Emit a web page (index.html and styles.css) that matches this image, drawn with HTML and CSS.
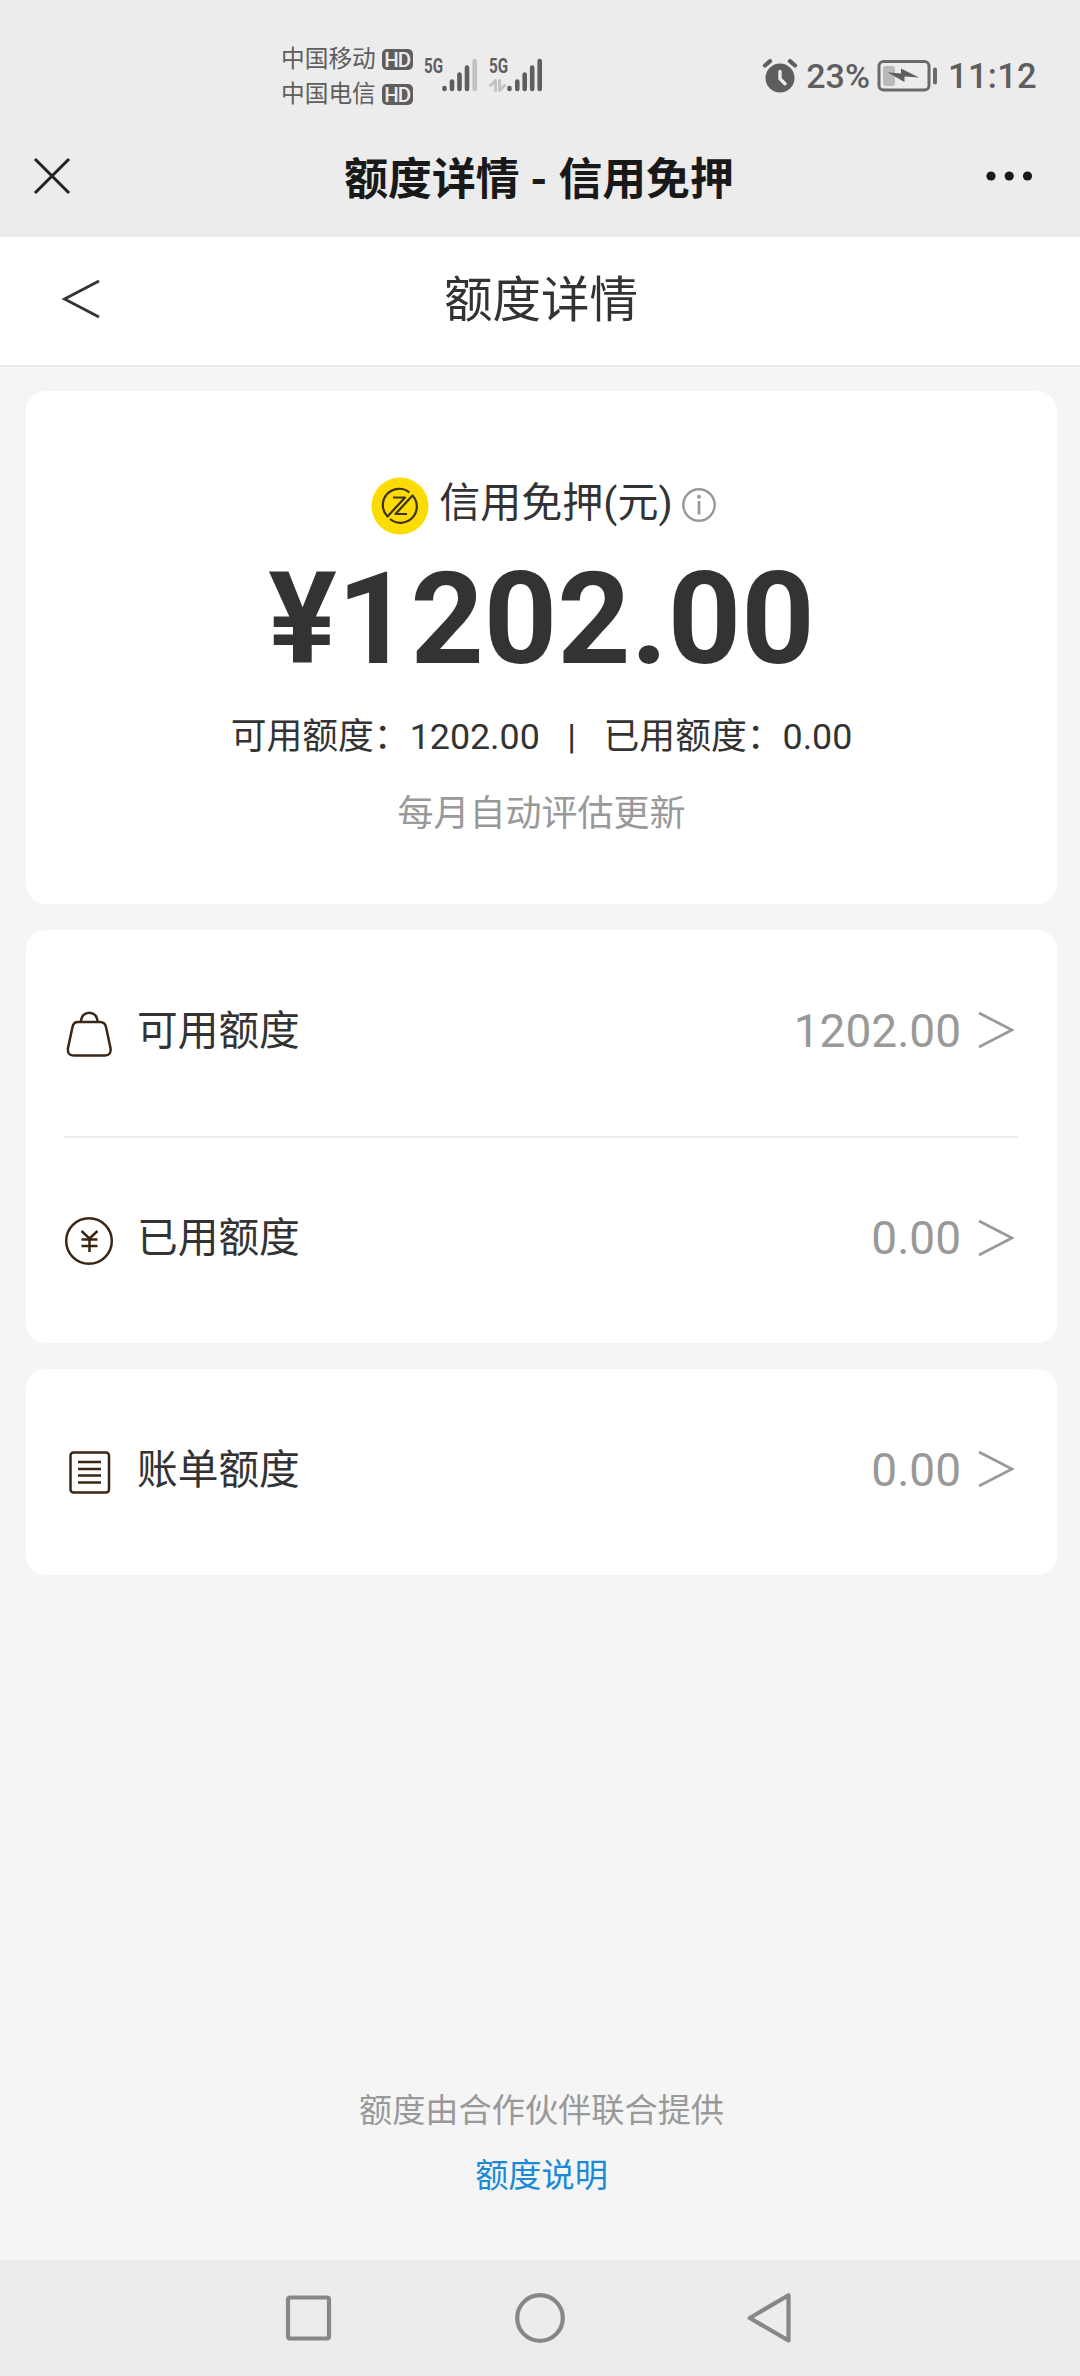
FILE: index.html
```html
<!DOCTYPE html>
<html lang="zh-CN">
<head>
<meta charset="utf-8">
<title>额度详情</title>
<link rel="stylesheet" href="styles.css">
</head>
<body>
<header class="status">
  <div class="carriers">
    <div class="carrier">中国移动<span class="hd">HD</span></div>
    <div class="carrier">中国电信<span class="hd">HD</span></div>
  </div>
  <div class="signal">
    <span class="gen">5G</span>
    <svg class="bars" width="36" height="34" viewBox="0 0 36 34" stroke="#5e5e5e" stroke-width="4.6" stroke-linecap="round"><path d="M2.5 30v1M10 23.5V31M17.5 16.5V31M25 9.500V31"/><path d="M32.700 3V31" stroke="#c2c2c2"/></svg>
  </div>
  <div class="signal second">
    <span class="gen">5G</span>
    <svg class="bars" width="54" height="34" viewBox="0 0 54 34" fill="none" stroke="#5e5e5e" stroke-width="4.600" stroke-linecap="round"><path d="M20.500 30v1M28.300 23.500V31M35.700 16.500V31M43.200 9.500V31M50.700 3V31"/><path d="M1.500 27.500L6.500 22.500V32.500M10.500 22.500V32.500L15.500 27.500" stroke="#c2c2c2" stroke-width="2.800" stroke-linejoin="round"/></svg>
  </div>
  <div class="power">
    <svg class="alarm" width="36" height="34" viewBox="0 0 36 34"><circle cx="18" cy="19" r="14.500" fill="#5e5e5e"/><path d="M3 6.500l5-4.300M33 6.500l-5-4.300" stroke="#5e5e5e" stroke-width="4.200" stroke-linecap="round"/><path d="M18 12.500v7.200l5 5" fill="none" stroke="#ececec" stroke-width="3.400" stroke-linecap="round" stroke-linejoin="round"/></svg>
    <span class="pct">23%</span>
    <svg class="battery" width="61" height="34" viewBox="0 0 61 34"><rect x="2" y="2.500" width="50" height="28.500" rx="4.500" fill="none" stroke="#6a6a6a" stroke-width="3"/><rect x="6" y="7" width="12" height="20" rx="3" fill="#b9b9b9"/><path d="M10.500 13.300L24 14.500V9.500L42 18.500L27.500 17.500V23Z" fill="#5e5e5e"/><rect x="56" y="8.500" width="4" height="17" rx="2" fill="#6a6a6a"/></svg>
    <span class="clock">11:12</span>
  </div>
</header>
<div class="titlebar">
  <svg class="close" width="38" height="38" viewBox="0 0 38 38"><path d="M2 2L36 36M36 2L2 36" stroke="#222" stroke-width="3"/></svg>
  <h1 class="window-title">额度详情 - 信用免押</h1>
  <svg class="more" width="48" height="12" viewBox="0 0 48 12" fill="#191919"><circle cx="6" cy="6" r="4.600"/><circle cx="24.200" cy="6" r="4.600"/><circle cx="42.500" cy="6" r="4.600"/></svg>
</div>
<nav class="nav">
  <svg class="back" width="40" height="40" viewBox="0 0 40 40"><path d="M39 2L4.500 20L39 38" fill="none" stroke="#333" stroke-width="2.800"/></svg>
  <h2 class="page-title">额度详情</h2>
</nav>
<main class="content">
  <section class="card summary">
    <div class="product">
      <svg class="logo" width="58" height="58" viewBox="0 0 58 58"><circle cx="29" cy="29" r="28.500" fill="#fddc04"/><g fill="none" stroke="#3a321e" stroke-width="2.200" stroke-linejoin="round"><path d="M38.500 15.500A16.300 16.300 0 0 0 16.500 39.500L34 20.500H22M19 42A16.300 16.300 0 0 0 41.500 18.500L24.500 37H36"/></g></svg>
      <span class="product-name">信用免押(元)</span>
      <svg class="info" width="36" height="36" viewBox="0 0 36 36"><circle cx="18" cy="18" r="15.700" fill="none" stroke="#999" stroke-width="2.400"/><circle cx="18" cy="9.800" r="2" fill="#999"/><path d="M18 14V27.500" stroke="#999" stroke-width="2.700"/></svg>
    </div>
    <div class="amount">¥1202.00</div>
    <div class="breakdown"><span>可用额度：1202.00</span><span class="bar">|</span><span>已用额度：0.00</span></div>
    <div class="note">每月自动评估更新</div>
  </section>
  <section class="card">
    <a class="row">
      <svg class="row-icon" width="50" height="50" viewBox="0 0 50 50" fill="none" stroke="#3a2614" stroke-width="2.500"><path d="M14 13h22q5 0 6 5l4.500 21q1 7.500-5.500 7.500H9.500q-6.500 0-5.500-7.500L8.500 18q1-5 5.500-5zM17 13c0-12.500 16.500-12.500 16.500 0"/></svg>
      <span class="label">可用额度</span><span class="value">1202.00</span>
      <svg class="chevron" width="36" height="38" viewBox="0 0 36 38"><path d="M1 2L34 19L1 36" fill="none" stroke="#999" stroke-width="2.700"/></svg>
    </a>
    <a class="row">
      <svg class="row-icon" width="50" height="50" viewBox="0 0 50 50" fill="none" stroke="#3a2614" stroke-width="2.500"><circle cx="25" cy="25" r="22.800"/><path d="M17.500 15L25.500 22.500L33.500 15M25.500 22.500V36M17.500 23.500h16M17.500 30h16"/></svg>
      <span class="label">已用额度</span><span class="value">0.00</span>
      <svg class="chevron" width="36" height="38" viewBox="0 0 36 38"><path d="M1 2L34 19L1 36" fill="none" stroke="#999" stroke-width="2.700"/></svg>
    </a>
  </section>
  <section class="card">
    <a class="row">
      <svg class="row-icon" width="50" height="50" viewBox="0 0 50 50" fill="none" stroke="#3a2614" stroke-width="2.500"><rect x="6.500" y="5.500" width="38.500" height="40" rx="3"/><path d="M14 15h23M14 22h23M14 28.500h23M14 35.500h23"/></svg>
      <span class="label">账单额度</span><span class="value">0.00</span>
      <svg class="chevron" width="36" height="38" viewBox="0 0 36 38"><path d="M1 2L34 19L1 36" fill="none" stroke="#999" stroke-width="2.700"/></svg>
    </a>
  </section>
  <footer class="footer">
    <p class="partner">额度由合作伙伴联合提供</p>
    <a class="link">额度说明</a>
  </footer>
</main>
<div class="system-nav">
  <svg width="52" height="52" viewBox="0 0 52 52" fill="none" stroke="#878787" stroke-width="4.200"><rect x="5" y="6.500" width="41" height="41" rx="2"/></svg>
  <svg width="52" height="52" viewBox="0 0 52 52" fill="none" stroke="#878787" stroke-width="4.200"><circle cx="26" cy="27" r="22.800"/></svg>
  <svg width="52" height="52" viewBox="0 0 52 52" fill="none" stroke="#878787" stroke-width="4.200" stroke-linejoin="round"><path d="M43.500 4.200V49.500L4.700 27Z"/></svg>
</div>
</body>
</html>
```
FILE: styles.css
```css
* { box-sizing: border-box; margin: 0; padding: 0; }
body {
  display: flex;
  flex-direction: column;
  height: 2376px;
  background: #f5f5f5;
  color: #333;
  font-family: Roboto, "Noto Sans CJK SC", sans-serif;
}
svg { display: block; flex: none; }

.status {
  display: flex;
  height: 115px;
  padding: 42px 43px 0 281px;
  background: #ececec;
  color: #5e5e5e;
}
.carriers { width: 143px; }
.carrier {
  display: flex;
  align-items: center;
  height: 35px;
  font-size: 23.7px;
  line-height: 35px;
  white-space: nowrap;
}
.hd {
  width: 31px;
  height: 21px;
  margin-left: 6px;
  border-radius: 5px;
  background: #5e5e5e;
  color: #ececec;
  font-size: 20.5px;
  font-weight: 500;
  letter-spacing: -1px;
  line-height: 22px;
  text-align: center;
}
.signal { display: flex; padding-top: 15px; }
.gen {
  width: 18px;
  font-size: 20px;
  font-weight: 700;
  line-height: 18px;
  transform: scaleX(.76);
  transform-origin: left;
}
.signal .bars { margin-top: 1px; }
.signal.second { margin-left: 11px; }
.signal.second .bars { margin-left: -18px; }
.power {
  display: flex;
  align-items: flex-start;
  margin-left: auto;
  padding-top: 17px;
  font-size: 34px;
  font-weight: 500;
  line-height: 34px;
}
.pct { margin-left: 8px; }
.battery { margin-left: 7px; }
.clock { margin-left: 10px; font-size: 34.5px; letter-spacing: .3px; }

.titlebar {
  display: grid;
  grid-template-columns: 1fr auto 1fr;
  align-items: center;
  height: 122px;
  padding: 0 47px 0 33px;
  background: #ececec;
}
.window-title {
  padding: 7px 0 0 12px;
  color: #191919;
  font-size: 43.8px;
  font-weight: 700;
  line-height: 60px;
}
.more { justify-self: end; }
.nav {
  display: grid;
  grid-template-columns: 1fr auto 1fr;
  align-items: center;
  height: 130px;
  padding: 0 58px 0 60px;
  border-bottom: 2px solid #e9e9e9;
  background: #fff;
}
.back { margin-bottom: 5px; }
.page-title { font-size: 48.5px; font-weight: 400; line-height: 66px; }

.content {
  display: flex;
  flex: 1;
  flex-direction: column;
  gap: 26px;
  padding: 24px 23px 0 26px;
}
.card { border-radius: 20px; background: #fff; }
.summary {
  display: flex;
  flex-direction: column;
  align-items: center;
  height: 513px;
  padding-top: 86px;
}
.product { display: flex; align-items: center; height: 58px; padding-left: 5px; }
.product-name { margin-left: 10px; padding-bottom: 6px; font-size: 41px; line-height: 58px; }
.info { margin: 0 0 3px 8px; }
.amount { margin-top: 9px; font-size: 128px; font-weight: 700; line-height: 150px; }
.breakdown { display: flex; margin-top: 17px; font-size: 35.8px; line-height: 52px; }
.bar { margin: 0 27.5px; }
.note { margin-top: 25px; color: #999; font-size: 36px; line-height: 52px; }

.row {
  display: flex;
  align-items: center;
  height: 206px;
  margin: 0 38px;
}
.row:not(:last-child) { height: 208px; border-bottom: 2px solid #ededed; }
.row:not(:last-child) .row-icon { margin-top: 1px; }
.label { margin-left: 23px; padding-bottom: 5px; font-size: 40.7px; line-height: 60px; }
.value { margin-left: auto; padding-bottom: 5px; color: #999; font-size: 46px; line-height: 60px; }
.chevron { margin: 0 5px 6px 17px; }
.row + .row { height: 205px; }

.footer {
  display: flex;
  flex-direction: column;
  align-items: center;
  margin-top: auto;
  padding-bottom: 60px;
  font-size: 33.2px;
  line-height: 48px;
}
.partner { color: #999; }
.link { margin-top: 17px; color: #1a8ad8; }

.system-nav {
  display: flex;
  gap: 179px;
  height: 116px;
  padding: 31px 0 0 283px;
  background: #ececec;
}
```
